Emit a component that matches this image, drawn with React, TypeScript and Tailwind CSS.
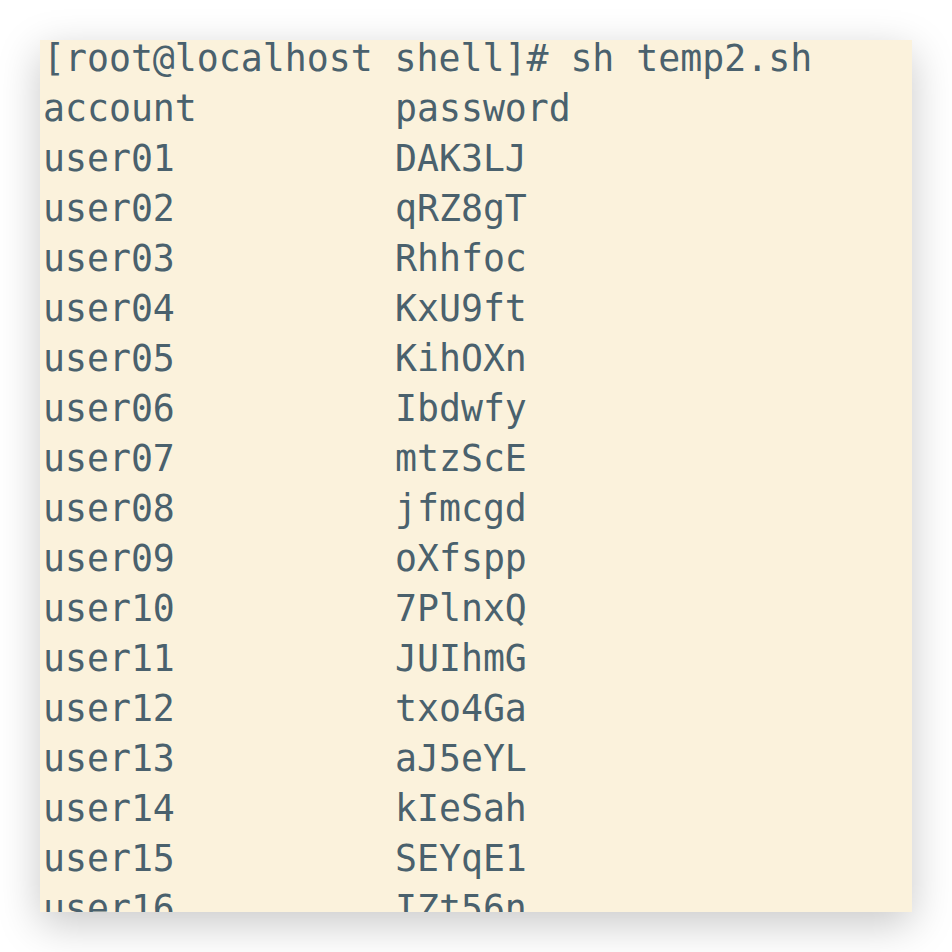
import React from "react";

const rows: [string, string][] = [
  ["account", "password"],
  ["user01", "DAK3LJ"],
  ["user02", "qRZ8gT"],
  ["user03", "Rhhfoc"],
  ["user04", "KxU9ft"],
  ["user05", "KihOXn"],
  ["user06", "Ibdwfy"],
  ["user07", "mtzScE"],
  ["user08", "jfmcgd"],
  ["user09", "oXfspp"],
  ["user10", "7PlnxQ"],
  ["user11", "JUIhmG"],
  ["user12", "txo4Ga"],
  ["user13", "aJ5eYL"],
  ["user14", "kIeSah"],
  ["user15", "SEYqE1"],
  ["user16", "IZt56n"],
];

export default function App() {
  return (
    <div className="w-[952px] h-[952px] bg-white p-[40px]">
      <div className="w-[872px] h-[872px] overflow-hidden bg-[#fbf2dc] shadow-[0_12px_40px_rgba(0,0,0,0.22)]">
        <div
          className="-mt-[6px] pl-[3px] text-[36.5px] leading-[50px] text-[#4a616d] whitespace-pre"
          style={{ fontFamily: '"DejaVu Sans Mono", monospace' }}
        >
          <div>[root@localhost shell]# sh temp2.sh</div>
          {rows.map(([a, p]) => (
            <div key={a} className="flex">
              <span className="w-[352px] shrink-0">{a}</span>
              <span>{p}</span>
            </div>
          ))}
        </div>
      </div>
    </div>
  );
}
